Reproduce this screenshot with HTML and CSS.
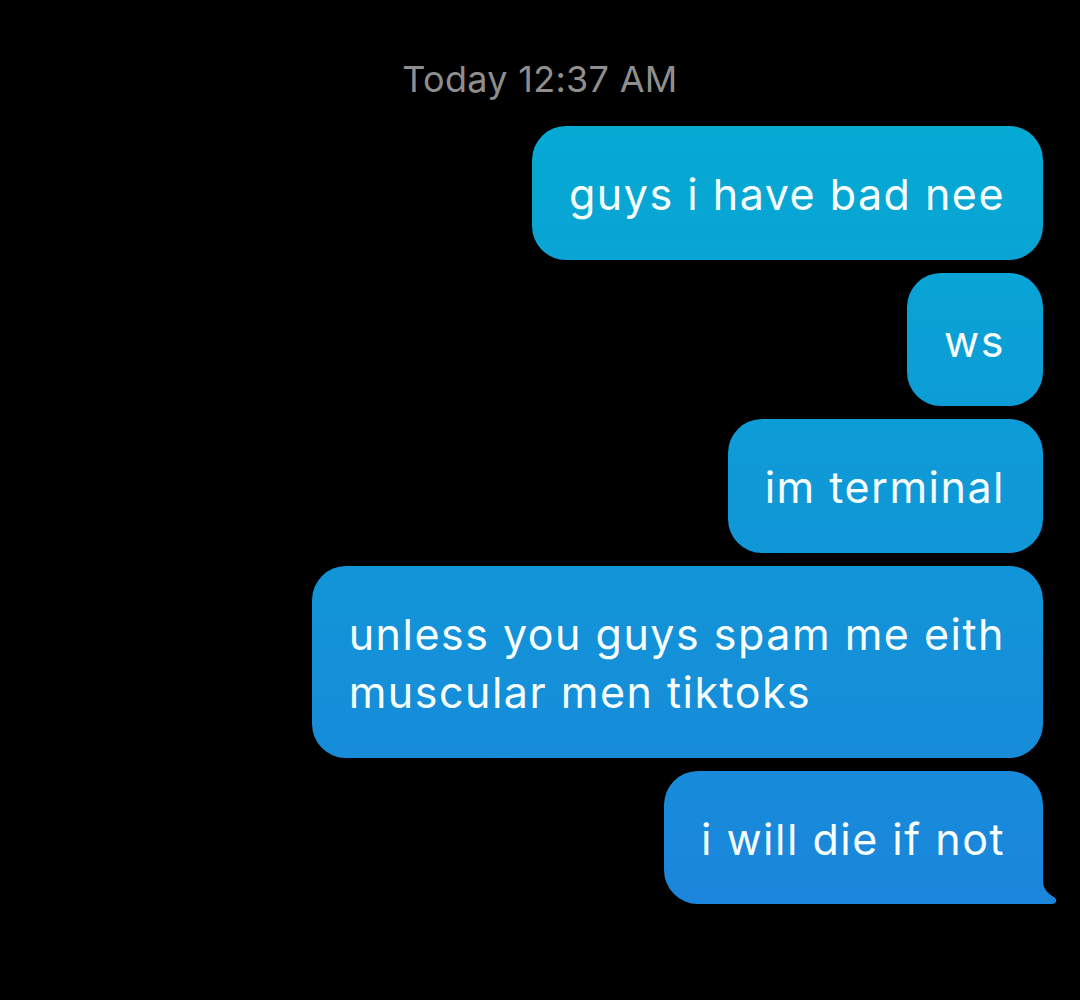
FILE: index.html
```html
<!DOCTYPE html>
<html lang="en">
<head>
<meta charset="utf-8">
<title>Messages</title>
<link rel="stylesheet" href="styles.css">
</head>
<body>
<main class="thread">
  <div class="timestamp">Today 12:37 AM</div>
  <div class="messages">
    <div class="bubble">guys i have bad nee</div>
    <div class="bubble">ws</div>
    <div class="bubble">im terminal</div>
    <div class="bubble">unless you guys spam me eith<br>muscular men tiktoks</div>
    <div class="bubble tail">i will die if not</div>
  </div>
</main>
</body>
</html>
```
FILE: styles.css
```css
html, body {
  margin: 0;
  padding: 0;
  background: #000;
}
body {
  width: 1080px;
  height: 1000px;
  overflow: hidden;
  font-family: Inter, "Liberation Sans", sans-serif;
}
.thread {
  display: flex;
  flex-direction: column;
}
.timestamp {
  text-align: center;
  color: #8e8e8e;
  font-size: 36px;
  line-height: 40px;
  margin-top: 59px;
  margin-bottom: 27px;
  letter-spacing: 0.3px;
}
.messages {
  display: flex;
  flex-direction: column;
  align-items: flex-end;
  gap: 13px;
  padding-right: 37px;
}
.bubble {
  position: relative;
  color: #f7feff;
  font-size: 43px;
  letter-spacing: 1.5px;
  line-height: 58.5px;
  padding: 39px 38px 36px 37px;
  border-radius: 34px;
  background: linear-gradient(to bottom, #05aad3 126px, #1b85db 903px) fixed;
  white-space: nowrap;
}
.tail {
  border-bottom-right-radius: 0;
}
.tail::before {
  content: "";
  position: absolute;
  bottom: 0;
  right: -14px;
  width: 30px;
  height: 26px;
  background: linear-gradient(to bottom, #05aad3 126px, #1b85db 903px) fixed;
  clip-path: path("M0 0 H16 V4 C16 10 21 16 27 19 C30.5 21 30 26 25 26 H0 Z");
}
```
